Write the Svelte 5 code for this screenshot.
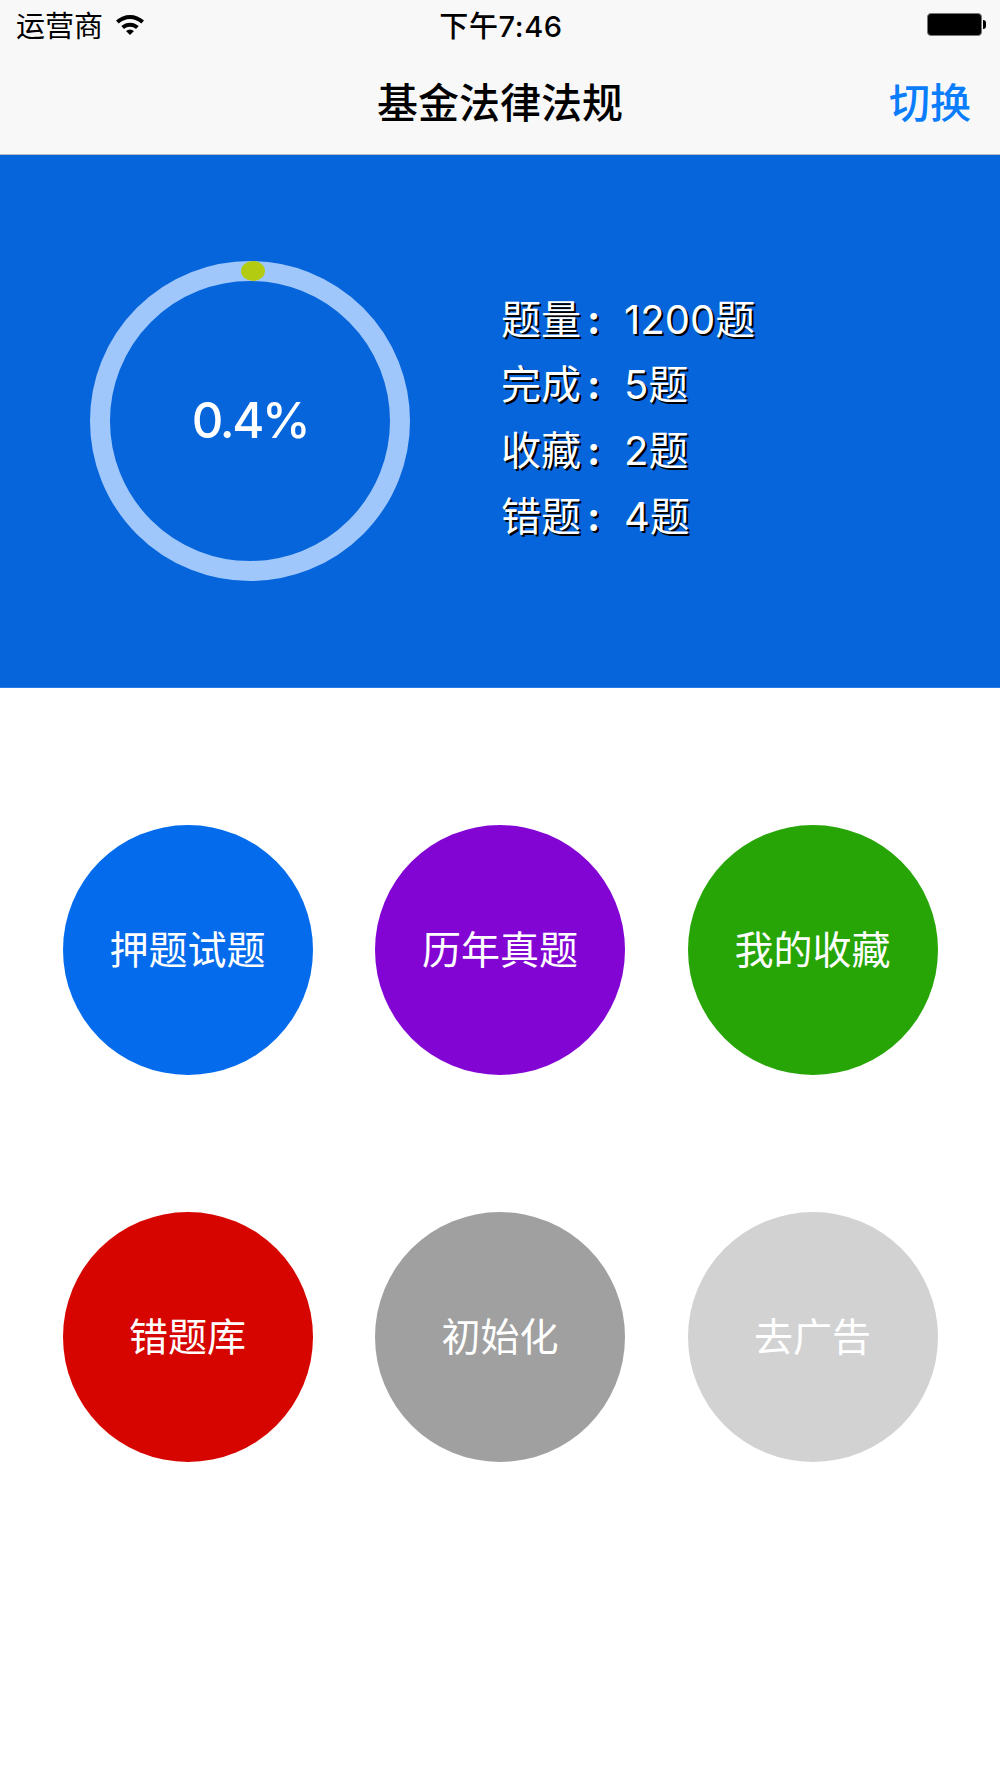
<script>
  const stats = [
    { label: '题量', value: '1200题' },
    { label: '完成', value: '5题' },
    { label: '收藏', value: '2题' },
    { label: '错题', value: '4题' }
  ];
  const actions = [
    { text: '押题试题', color: '#046bec' },
    { text: '历年真题', color: '#8305d4' },
    { text: '我的收藏', color: '#27a507' },
    { text: '错题库', color: '#d60500' },
    { text: '初始化', color: '#a0a0a0' },
    { text: '去广告', color: '#d2d2d2' }
  ];
</script>

<div class="page">
  <header class="bar">
    <div class="status">
      <div class="left">
        <span class="carrier">运营商</span>
        <svg class="wifi" viewBox="0 0 30 22" width="30" height="22">
          <path d="M1 7.5 C9 0 21 0 29 7.5 L26.3 10.5 C19.5 4.5 10.5 4.5 3.7 10.5 Z M6.3 13 C11.5 8.5 18.5 8.5 23.7 13 L21 16 C17.5 13 12.5 13 9 16 Z M11 18 C13.5 16 16.5 16 19 18 L15 22 Z" fill="#000" />
        </svg>
      </div>
      <span class="time">下午7:46</span>
      <div class="battery"><span class="cell"></span><span class="nub"></span></div>
    </div>
    <div class="nav">
      <span class="spacer"></span>
      <h1>基金法律法规</h1>
      <span class="switch">切换</span>
    </div>
  </header>

  <section class="hero">
    <div class="ring">
      <span class="dot"></span>
      <span class="pct">0.4%</span>
    </div>
    <ul class="stats">
      {#each stats as s}
        <li><span class="label">{s.label}<span class="colon">:</span></span><span>{s.value}</span></li>
      {/each}
    </ul>
  </section>

  <section class="grid">
    {#each actions as a}
      <button class="circle" style:background={a.color}>{a.text}</button>
    {/each}
  </section>
</div>

<style>
  :global(body) { margin: 0; background: #fff; }
  .page {
    width: 1000px;
    height: 1778px;
    overflow: hidden;
    font-family: "Inter", "Noto Sans CJK SC", sans-serif;
    background: #fff;
  }
  .bar {
    height: 154px;
    background: #f8f8f8;
    border-bottom: 1px solid #b8bcc0;
  }
  .status {
    height: 50px;
    padding: 0 14px 2px 16px;
    box-sizing: border-box;
    display: grid;
    grid-template-columns: 1fr auto 1fr;
    align-items: center;
    color: #000;
  }
  .left { display: flex; align-items: center; gap: 12px; }
  .carrier { font-size: 29px; line-height: 48px; font-family: "Noto Sans CJK SC", sans-serif; }
  .time { font-size: 29px; font-weight: 500; letter-spacing: 0.6px; }
  .battery { justify-self: end; display: flex; align-items: center; }
  .cell {
    width: 55px;
    height: 23px;
    box-sizing: border-box;
    background: #000;
    border: 1px solid #777;
    border-radius: 4px;
  }
  .nub { width: 3px; height: 9px; background: #000; border-radius: 0 3px 3px 0; margin-left: 1px; }
  .nav {
    height: 104px;
    box-sizing: border-box;
    display: grid;
    grid-template-columns: 1fr auto 1fr;
    align-items: center;
    padding: 0 29px 4px;
  }
  h1 { margin: 0; font-size: 41px; font-weight: 500; color: #000; font-family: "Noto Sans CJK SC", sans-serif; line-height: 1; }
  .switch { justify-self: end; font-size: 41px; font-weight: 500; color: #0a7dfd; font-family: "Noto Sans CJK SC", sans-serif; line-height: 1; }
  .hero {
    height: 533px;
    background: #0665db;
    border-bottom: 1px solid #2a7be3;
    display: flex;
    align-items: center;
    box-sizing: border-box;
    padding: 0 0 0 90px;
  }
  .ring {
    position: relative;
    width: 320px;
    height: 320px;
    box-sizing: border-box;
    border: 20px solid #9fc7fb;
    border-radius: 50%;
    display: flex;
    align-items: center;
    justify-content: center;
    flex: none;
  }
  .dot {
    position: absolute;
    top: -20px;
    left: 131px;
    width: 24px;
    height: 20px;
    border-radius: 50%;
    background: #b3cc12;
  }
  .pct { color: #fff; font-size: 49px; font-weight: 500; letter-spacing: -2.4px; padding-bottom: 2px; }
  .stats {
    list-style: none;
    margin: 0 0 6px 91px;
    padding: 0;
    color: #fff;
    font-size: 40px;
    line-height: 65.6px;
    text-shadow: 2px 2px 0 #000;
    font-family: "Inter", "Noto Sans CJK SC", sans-serif;
  }
  .stats li { display: flex; }
  .label { width: 123px; }
  .colon { margin-left: 6px; font-weight: 700; }
  .grid {
    display: grid;
    grid-template-columns: repeat(3, 250px);
    justify-content: center;
    column-gap: 62.5px;
    row-gap: 137px;
    padding-top: 137px;
  }
  .circle {
    width: 250px;
    height: 250px;
    border: 0;
    padding: 0 0 6px;
    border-radius: 50%;
    color: #fff;
    font-size: 39px;
    font-family: "Noto Sans CJK SC", sans-serif;
    font-weight: 400;
  }
</style>
